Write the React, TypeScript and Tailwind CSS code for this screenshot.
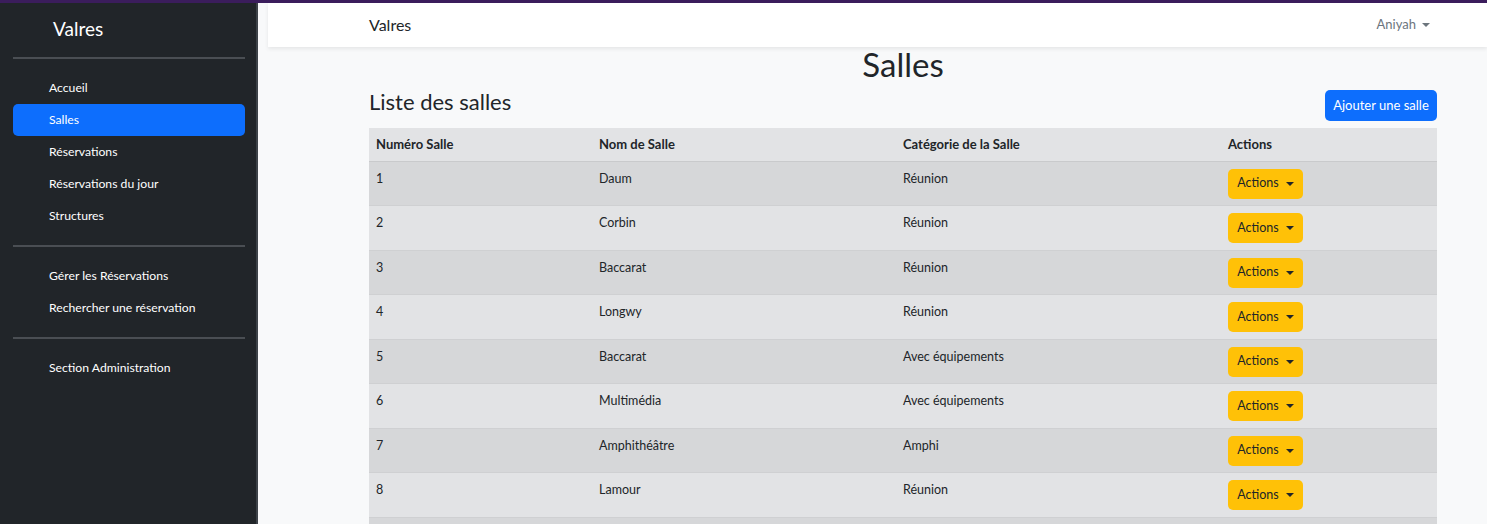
import React from 'react'

interface Salle {
    numero: number
    nom: string
    categorie: string
}

const salles: Salle[] = [
    { numero: 1, nom: 'Daum', categorie: 'Réunion' },
    { numero: 2, nom: 'Corbin', categorie: 'Réunion' },
    { numero: 3, nom: 'Baccarat', categorie: 'Réunion' },
    { numero: 4, nom: 'Longwy', categorie: 'Réunion' },
    { numero: 5, nom: 'Baccarat', categorie: 'Avec équipements' },
    { numero: 6, nom: 'Multimédia', categorie: 'Avec équipements' },
    { numero: 7, nom: 'Amphithéâtre', categorie: 'Amphi' },
    { numero: 8, nom: 'Lamour', categorie: 'Réunion' },
]

const Caret: React.FC<{ className?: string }> = ({ className }) => (
    <span
        className={`inline-block w-0 h-0 border-l-[4px] border-r-[4px] border-t-[4px] border-l-transparent border-r-transparent ${className ?? ''}`}
    />
)

const Sidebar: React.FC = () => {
    const groups = [
        ['Accueil', 'Salles', 'Réservations', 'Réservations du jour', 'Structures'],
        ['Gérer les Réservations', 'Rechercher une réservation'],
        ['Section Administration'],
    ]
    return (
        <aside className="w-[258px] shrink-0 bg-[#212529] border-r-2 border-[#3d4248] text-white pl-[13px] pr-[11px] pt-[13px]">
            <div className="pl-[40px] text-[19px] leading-[26px] h-[26px]">Valres</div>
            {groups.map((items, gi) => (
                <div key={gi}>
                    <hr className={`border-0 h-[2px] bg-[#4a4e53] ${gi === 0 ? 'mt-[15px] mb-[13px]' : 'mt-[13px] mb-[13px]'}`} />
                    <ul className="flex flex-col">
                        {items.map((item) => (
                            <li
                                key={item}
                                className={`h-[32px] flex items-center pl-[36px] text-[12.2px] rounded-[5px] ${
                                    item === 'Salles' ? 'bg-[#0d6efd]' : ''
                                }`}
                            >
                                {item}
                            </li>
                        ))}
                    </ul>
                </div>
            ))}
        </aside>
    )
}

const App: React.FC = () => {
    return (
        <div
            className="h-[524px] overflow-hidden flex flex-col bg-[#f8f9fa] text-[#212529] border-t-[3px] border-[#3b1d5c]"
            style={{ fontFamily: 'Lato, "Noto Sans", sans-serif' }}
        >
            <div className="flex flex-1 min-h-0">
                <Sidebar />
                <main className="flex-1 min-w-0 flex flex-col">
                    <nav className="shrink-0 ml-[10px] h-[44px] bg-white shadow-[0_2px_4px_rgba(0,0,0,0.08)] flex items-center justify-between pl-[101px] pr-[57px]">
                        <span className="text-[16px]">Valres</span>
                        <span className="text-[13px] text-[#6c757d] flex items-center gap-[6px]">
                            Aniyah
                            <Caret className="border-t-[#6c757d]" />
                        </span>
                    </nav>
                    <div className="shrink-0 pl-[111px] pr-[50px]">
                        <h1 className="text-center text-[33px] leading-[36px] -mt-[1px]">Salles</h1>
                        <div className="flex items-end justify-between mt-[5px] mb-[7px]">
                            <h2 className="text-[22px] leading-[30px] mb-[4px]">Liste des salles</h2>
                            <button className="bg-[#0d6efd] text-white text-[13px] rounded-[5px] w-[112px] h-[31px]">
                                Ajouter une salle
                            </button>
                        </div>
                        <table className="w-full text-[12.5px] border-collapse table-fixed">
                            <thead>
                                <tr className="bg-[#e2e3e5] h-[33px] border-b border-[#c9cacc]">
                                    <th className="text-left font-bold pl-[7px] w-[223px] text-[13px]">Numéro Salle</th>
                                    <th className="text-left font-bold pl-[7px] w-[304px] text-[13px]">Nom de Salle</th>
                                    <th className="text-left font-bold pl-[7px] w-[325px] text-[13px]">Catégorie de la Salle</th>
                                    <th className="text-left font-bold pl-[7px] text-[13px]">Actions</th>
                                </tr>
                            </thead>
                            <tbody>
                                {salles.map(({ numero, nom, categorie }, index) => (
                                    <tr
                                        key={numero}
                                        className={`h-[44.5px] border-b border-[#cfd0d2] align-top ${
                                            index % 2 === 0 ? 'bg-[#d6d7d9]' : 'bg-[#e2e3e5]'
                                        }`}
                                    >
                                        <td className="pl-[7px] pt-[8px]">{numero}</td>
                                        <td className="pl-[7px] pt-[8px]">{nom}</td>
                                        <td className="pl-[7px] pt-[8px]">{categorie}</td>
                                        <td className="pl-[7px] pt-[7px]">
                                            <button className="bg-[#ffc107] rounded-[5px] h-[30px] w-[75px] flex items-center justify-center gap-[7px] text-[12.5px] text-[#212529]">
                                                Actions
                                                <Caret className="border-t-[#212529]" />
                                            </button>
                                        </td>
                                    </tr>
                                ))}
                                <tr className="h-[44.5px] bg-[#d6d7d9]">
                                    <td colSpan={4} />
                                </tr>
                            </tbody>
                        </table>
                    </div>
                </main>
            </div>
        </div>
    )
}

export default App
